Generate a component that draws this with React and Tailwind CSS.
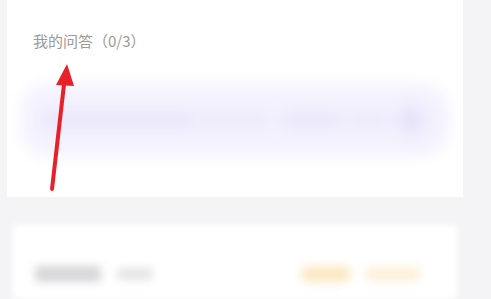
import React from "react";

const Arrow = () => (
  <svg
    className="absolute left-0 top-0"
    width="491"
    height="299"
    viewBox="0 0 491 299"
  >
    <line
      x1="52"
      y1="189"
      x2="64.5"
      y2="80"
      stroke="#e8202a"
      strokeWidth="4"
      strokeLinecap="round"
    />
    <polygon points="67,64 56,85 74,86" fill="#e8202a" />
  </svg>
);

export default function App() {
  return (
    <div
      className="relative w-[491px] h-[299px] overflow-hidden bg-[#f4f4f6] flex flex-col pl-[7px] pr-[28px]"
      style={{ fontFamily: '"Noto Sans CJK SC", "Noto Sans", sans-serif' }}
    >
      {/* top card */}
      <div className="h-[197px] bg-white shrink-0 flex flex-col">
        <div className="pt-[31px] pl-[26px] text-[15px] leading-[20px] text-[#9a9a9a]">
          我的问答（0/3）
        </div>
        <div className="mt-[33px] mx-[14px] h-[72px] rounded-[26px] bg-[#f4f2fd] blur-[7px] flex items-center pl-[22px] pr-[26px]">
          <div className="h-[14px] w-[150px] rounded-full bg-[#e6e3f9] blur-[4px]" />
          <div className="h-[14px] w-[70px] ml-[6px] rounded-full bg-[#ebe8fa] blur-[4px]" />
          <div className="h-[14px] w-[62px] ml-[12px] rounded-full bg-[#e8e5f9] blur-[4px]" />
          <div className="h-[14px] w-[40px] ml-[6px] rounded-full bg-[#ece9fa] blur-[4px]" />
          <div className="ml-auto h-[24px] w-[24px] rounded-full bg-[#e0ddf8] blur-[4px]" />
        </div>
      </div>

      {/* second card */}
      <div className="mt-[28px] mx-[6px] flex-1 bg-white blur-[3px] flex items-start pt-[41px] pl-[22px] pr-[36px]">
        <div className="flex items-center gap-[16px]">
          <div className="h-[16px] w-[66px] rounded bg-[#d6d6d9] blur-[3px]" />
          <div className="h-[12px] w-[36px] rounded bg-[#e4e4e7] blur-[3px]" />
        </div>
        <div className="ml-auto flex items-center gap-[14px]">
          <div className="h-[16px] w-[50px] rounded-full bg-[#fbe8c2] blur-[3px]" />
          <div className="h-[14px] w-[56px] rounded-full bg-[#fdf0d8] blur-[3px]" />
        </div>
      </div>

      <Arrow />
    </div>
  );
}
